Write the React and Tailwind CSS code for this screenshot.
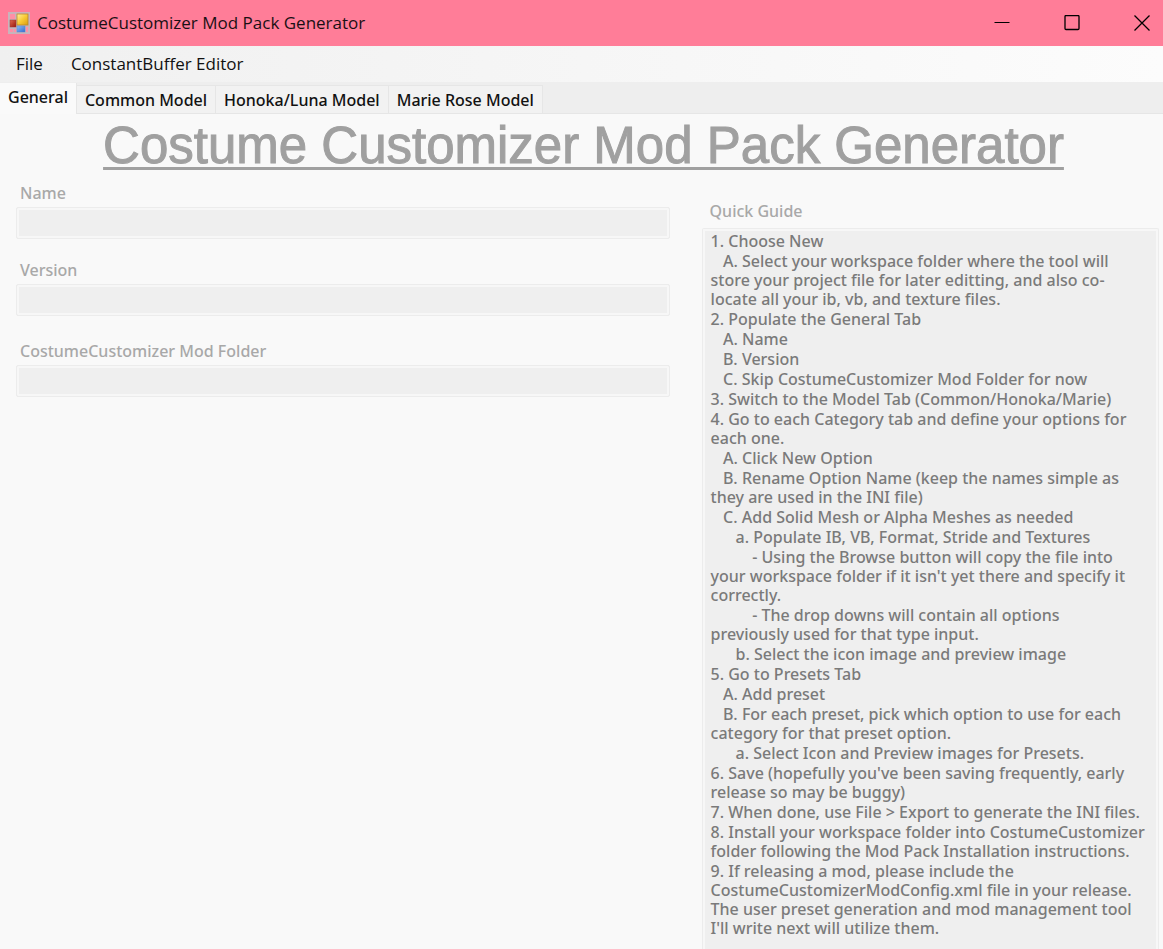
import { useState } from 'react'

const TABS = ['General', 'Common Model', 'Honoka/Luna Model', 'Marie Rose Model']

const FIELDS = [
  { id: 'name', label: 'Name', spacing: '' },
  { id: 'version', label: 'Version', spacing: 'mt-5' },
  { id: 'modFolder', label: 'CostumeCustomizer Mod Folder', spacing: 'mt-6' },
]

const GUIDE = [
  '1. Choose New',
  '   A. Select your workspace folder where the tool will\nstore your project file for later editting, and also co-\nlocate all your ib, vb, and texture files.',
  '2. Populate the General Tab',
  '   A. Name',
  '   B. Version',
  '   C. Skip CostumeCustomizer Mod Folder for now',
  '3. Switch to the Model Tab (Common/Honoka/Marie)',
  '4. Go to each Category tab and define your options for\neach one.',
  '   A. Click New Option',
  '   B. Rename Option Name (keep the names simple as\nthey are used in the INI file)',
  '   C. Add Solid Mesh or Alpha Meshes as needed',
  '      a. Populate IB, VB, Format, Stride and Textures',
  '          - Using the Browse button will copy the file into\nyour workspace folder if it isn\'t yet there and specify it\ncorrectly.',
  '          - The drop downs will contain all options\npreviously used for that type input.',
  '      b. Select the icon image and preview image',
  '5. Go to Presets Tab',
  '   A. Add preset',
  '   B. For each preset, pick which option to use for each\ncategory for that preset option.',
  '      a. Select Icon and Preview images for Presets.',
  '6. Save (hopefully you\'ve been saving frequently, early\nrelease so may be buggy)',
  '7. When done, use File > Export to generate the INI files.',
  '8. Install your workspace folder into CostumeCustomizer\nfolder following the Mod Pack Installation instructions.',
  '9. If releasing a mod, please include the\nCostumeCustomizerModConfig.xml file in your release.\nThe user preset generation and mod management tool\nI\'ll write next will utilize them.',
]

export default function App() {
  const [activeTab, setActiveTab] = useState('General')

  return (
    <div className="min-h-screen flex flex-col bg-[#f9f9f9] font-['Noto_Sans','Open_Sans',sans-serif] text-base font-medium text-[#111]">
      <TitleBar />

      {/* Menu */}
      <nav className="h-9 px-2 flex items-center bg-linear-to-r from-[#f0f0f0] to-[#fcfcfc] font-['Open_Sans','Noto_Sans',sans-serif] text-[17px] font-normal">
        <button className="px-2 leading-6">File</button>
        <button className="ml-3 px-2 leading-6">ConstantBuffer Editor</button>
      </nav>

      {/* Tabs */}
      <div role="tablist" className="h-8 flex items-end bg-[#eee] border-b border-[#e6e6e6]">
        {TABS.map((tab) => (
          <Tab key={tab} label={tab} active={tab === activeTab} onSelect={() => setActiveTab(tab)} />
        ))}
      </div>

      <main className="flex-1 flex flex-col pl-4 pr-1">
        <h1 className="mt-1.5 pr-2 text-center font-['Liberation_Sans',Arial,sans-serif] text-[51px] leading-[52px] font-normal text-[#a0a0a0] [-webkit-text-stroke:1px_#a0a0a0] underline decoration-[3px] underline-offset-4">
          Costume Customizer Mod Pack Generator
        </h1>

        <div className="flex-1 grid grid-cols-[653fr_457fr] gap-x-8">
          <form className="pt-2.5">
            {FIELDS.map((field) => (
              <Field key={field.id} {...field} />
            ))}
          </form>

          <section className="pt-7 flex flex-col" aria-labelledby="guide-title">
            <h2 id="guide-title" className="pl-2 leading-[22px] text-[#a8a8a8]">Quick Guide</h2>
            <div className="mt-1.5 flex-1 flex flex-col rounded-t-xs border border-b-0 border-[#ececec] bg-[#f7f7f7] px-0.5 pt-0.5">
              <div className="flex-1 bg-[#efefef] pl-1.5 pt-px flex flex-col gap-px text-[#7a7a7a]">
                {GUIDE.map((line, i) => (
                  <p key={i} className="whitespace-pre-wrap leading-[19px]">{line}</p>
                ))}
              </div>
            </div>
          </section>
        </div>
      </main>
    </div>
  )
}

function TitleBar() {
  return (
    <header className="h-[46px] flex items-center bg-[#ff7d98] pl-2">
      <AppIcon />
      <span className="ml-[7px] flex-1 font-['Open_Sans','Noto_Sans',sans-serif] text-[17px] font-normal text-[#1a1014]">CostumeCustomizer Mod Pack Generator</span>
      <div className="flex gap-[54px] pr-[13px]">
        <button aria-label="Minimize">
          <svg width="16" height="16" viewBox="0 0 16 16" stroke="#000"><path d="M0.5 7.5h15" /></svg>
        </button>
        <button aria-label="Maximize">
          <svg width="16" height="16" viewBox="0 0 16 16" fill="none" stroke="#000" strokeWidth="1.3">
            <rect x="1" y="0.5" width="14" height="14" rx="1" />
          </svg>
        </button>
        <button aria-label="Close">
          <svg width="16" height="16" viewBox="0 0 16 16" stroke="#000" strokeWidth="1.3"><path d="M0.5 0.5l15 15M15.5 0.5l-15 15" /></svg>
        </button>
      </div>
    </header>
  )
}

function AppIcon() {
  return (
    <svg width="22" height="22" viewBox="0 0 22 22" aria-hidden="true">
      <defs>
        <linearGradient id="yellow" x1="0" y1="0" x2="1" y2="1">
          <stop offset="0" stopColor="#fff0a0" />
          <stop offset="0.5" stopColor="#f8cb35" />
          <stop offset="1" stopColor="#d99c10" />
        </linearGradient>
        <linearGradient id="red" x1="0" y1="0" x2="1" y2="1">
          <stop offset="0" stopColor="#e06a50" />
          <stop offset="1" stopColor="#98160c" />
        </linearGradient>
        <linearGradient id="blue" x1="0" y1="0" x2="1" y2="1">
          <stop offset="0" stopColor="#8fbcf5" />
          <stop offset="1" stopColor="#2f6bd0" />
        </linearGradient>
      </defs>
      <rect width="22" height="22" fill="#c9b3bb" />
      <path d="M2 2h5v5H2zM2 17h3v3H2zM6 17h2v3H6zM18 15h2v5h-2z" fill="#ff8fa6" />
      <rect x="2" y="8" width="6" height="7" fill="url(#red)" stroke="#9b3a35" strokeWidth="0.5" />
      <rect x="9" y="2" width="11" height="11" fill="url(#yellow)" stroke="#b98a2a" strokeWidth="0.8" />
      <rect x="9" y="14" width="8" height="6" fill="url(#blue)" stroke="#5d86c8" strokeWidth="0.5" />
    </svg>
  )
}

function Tab({ label, active, onSelect }) {
  return (
    <button
      role="tab"
      aria-selected={active}
      onClick={onSelect}
      className={
        active
          ? 'h-[31px] px-2 pb-1 -mb-px bg-[#fafafa] border-r border-[#e6e6e6] leading-6'
          : 'h-7 px-2 bg-[#f2f2f2] border-t border-r border-[#e6e6e6] leading-6'
      }
    >
      {label}
    </button>
  )
}

function Field({ id, label, spacing }) {
  return (
    <div className={spacing}>
      <label htmlFor={id} className="block pl-1 leading-[22px] text-[#a8a8a8]">{label}</label>
      <input
        id={id}
        type="text"
        disabled
        className="mt-[3px] block w-full h-8 px-2 rounded-xs border border-[#ececec] bg-[#efefef] ring-2 ring-inset ring-[#f7f7f7]"
      />
    </div>
  )
}
